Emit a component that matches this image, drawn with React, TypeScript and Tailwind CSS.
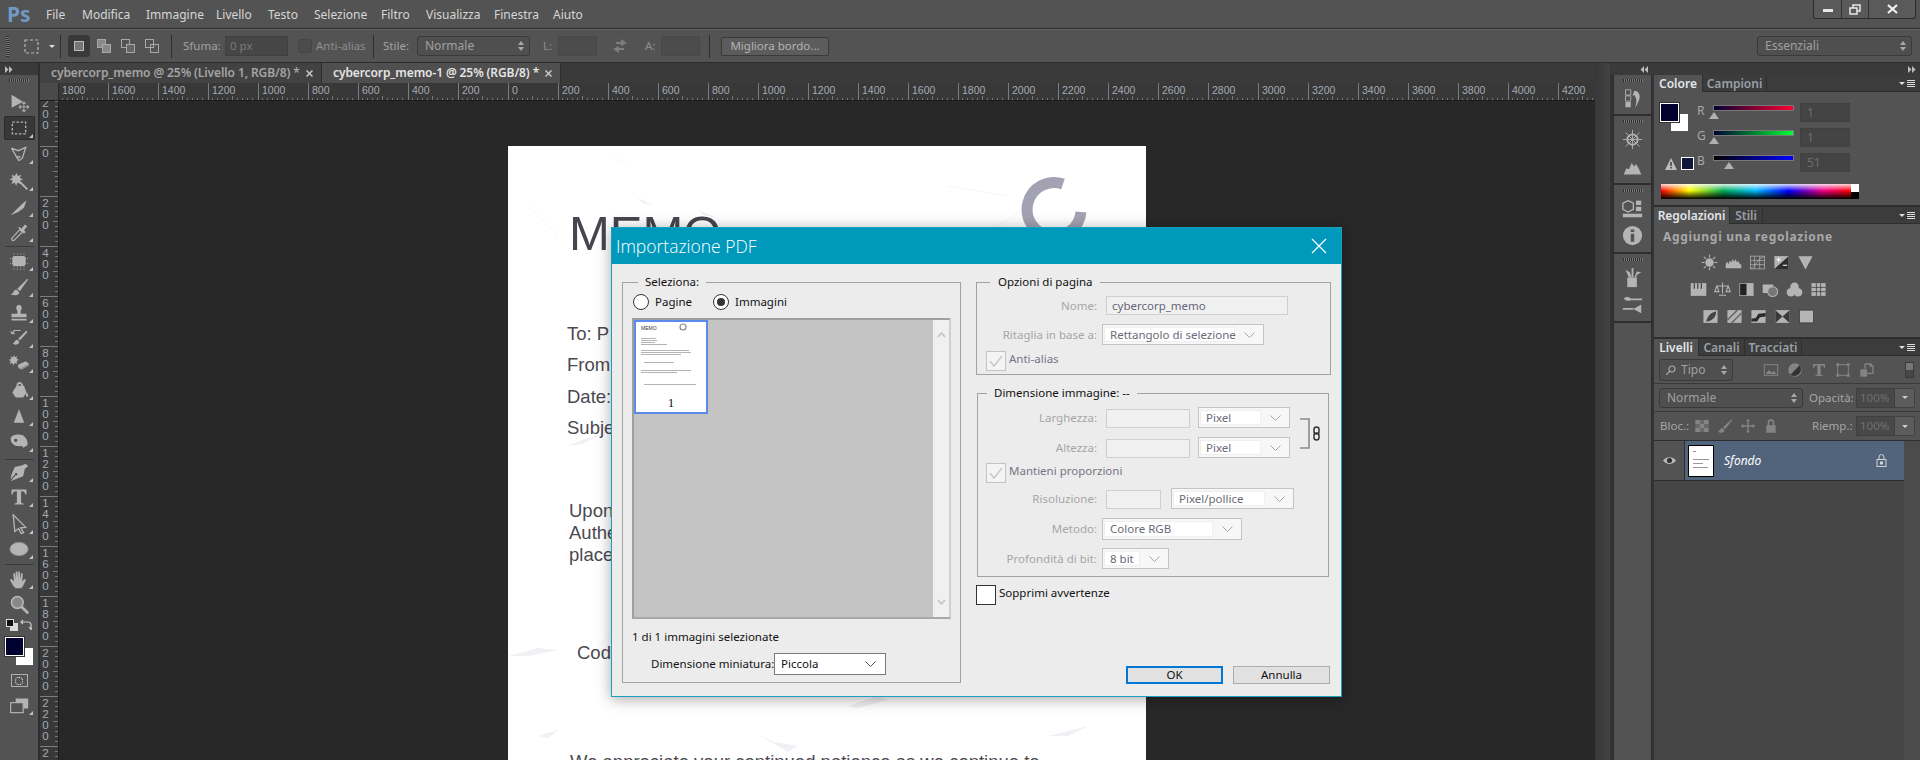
import type { ReactNode } from "react";

const ui = "font-['Noto_Sans','Open_Sans',sans-serif]";
const grip = "h-[3px] w-[20px] bg-[repeating-linear-gradient(to_right,#2e2e2e_0,#2e2e2e_1px,#7a7a7a_1px,#7a7a7a_2px)]";

function Ico({ size = 24, color = "text-[#b4b4b4]", children }: { size?: number; color?: string; children: ReactNode }) {
  return (
    <svg width={size} height={size} viewBox="0 0 24 24" className={`block shrink-0 ${color}`} fill="currentColor">
      {children}
    </svg>
  );
}

function Arrows({ dir }: { dir: "l" | "r" }) {
  return (
    <svg width="8" height="7" viewBox="0 0 8 7" fill="#bdbdbd" className="block">
      {dir === "r" ? <path d="M0 0l3.500 3.500L0 7zM4 0l3.500 3.500L4 7z" /> : <path d="M4 0L.5 3.500 4 7zM8 0L4.500 3.500 8 7z" />}
    </svg>
  );
}

const toolIcons: Record<string, ReactNode> = {
  move: (
    <>
      <path d="M3 3l13 8-13 7z" />
      <path d="M17 12v10M12 17h10M17 11l-2 2h4zM17 23l-2-2h4zM11 17l2-2v4zM23 17l-2-2v4z" stroke="currentColor" fill="none" strokeWidth="1" />
    </>
  ),
  marquee: <rect x="4" y="5" width="16" height="14" fill="none" stroke="currentColor" strokeWidth="1.6" strokeDasharray="3 2" />,
  lasso: <path d="M3 5l8 3 9-4-4 13-4 3-2-3 1-2 3 1M3 5l7 12" fill="none" stroke="currentColor" strokeWidth="1.6" />,
  wand: (
    <>
      <path d="M9 2l1.5 4 4-1.5-1.5 4 4 1.5-4 1.5 1 4-4-1.5-1.5 4-1.5-4-4 1.5 1.5-4-4-1.5 4-1.5-1.5-4 4 1.5z" />
      <path d="M12 12l10 10" stroke="currentColor" strokeWidth="2.4" />
    </>
  ),
  slice: <path d="M2 22L15 9l6-5-3 9-7 5z" />,
  dropper: (
    <>
      <path d="M4 22l-1-2L13 9l3 3L6 22z" fill="none" stroke="currentColor" strokeWidth="1.4" />
      <path d="M13 6l2 2 4-5 3 2-4 5 2 2-2 2-7-7z" />
    </>
  ),
  heal: (
    <>
      <rect x="4" y="6" width="16" height="12" rx="3" />
      <path d="M6 3v20M10 3v20M14 3v20M18 3v20M1 9h22M1 15h22" stroke="currentColor" strokeWidth=".9" strokeDasharray="1.5 1.5" />
    </>
  ),
  brush: <path d="M22 2L10 14l3 3L23 3zM9 15c-4 0-3 5-7 6 5 2 11 1 10-3z" />,
  stamp: <path d="M12 2a4 4 0 0 1 2 7v4h7v4H3v-4h7V9a4 4 0 0 1 2-7zM3 19h18v2H3z" />,
  history: (
    <>
      <path d="M21 3L11 13l2 2L22 5zM10 14c-3 0-3 4-6 5 4 2 9 1 8-3z" />
      <path d="M14 3H6l-2 4M4 7l-2-3M4 7l3-1" fill="none" stroke="currentColor" strokeWidth="1.4" />
    </>
  ),
  eraser: (
    <>
      <path d="M6 2l1 3 3-1-1 3 3 1-3 2 1 3-3-1-2 3-1-3-3 1 1-3-2-2 3-1-1-3 3 1z" />
      <path d="M11 14l9-4 4 3-9 5-4-1z" />
      <path d="M11 15v3l4 2 9-5v-2l-9 5z" opacity=".7" />
    </>
  ),
  bucket: <path d="M9 7h9l3 8-4 6H8l-4-6zM9 7c0-6 7-6 8 0h-2c-1-3-4-3-4 0zM21 15c2 2 3 4 1 5s-2-3-1-5z" />,
  gradient: <path d="M12 3l7 18H5z" />,
  dodge: <path d="M2 8c0-5 13-7 17-2 3 3 4 7 3 10l-5 3c-1-3-3-2-5-2-6 0-10-4-10-9zM8 8a2 2 0 1 0 .1 0z" fillRule="evenodd" />,
  pen: <path d="M20 2l3 3-4 3-2 9-10 4-5 2 6-7a1.500 1.500 0 1 0-1-1l-5 6 1-6 4-9 9-2z" />,
  text: <path d="M3 3h18v6h-1.500c-.5-3-1-4-5-4v14l3 1v1H6.500v-1l3-1V5c-4 0-4.500 1-5 4H3z" />,
  select: <path d="M5 1l15 15-6 .5 3.500 6-3 1-3-6L7 21z" fill="none" stroke="currentColor" strokeWidth="1.600" />,
  ellipse: <ellipse cx="12" cy="12" rx="11" ry="8" stroke="#8a8a8a" strokeWidth="1" />,
  hand: <path d="M5 20l-4-7 2-1 3 3-1-10h2l1 7V3h2l1 9V3h2l.5 9 1-7h2l-.5 10 2.500-3 2 1-4 8-2 2H8z" />,
  zoom: (
    <>
      <circle cx="10" cy="9" r="7" stroke="currentColor" strokeWidth="2" fillOpacity=".55" />
      <path d="M15 14l8 8" stroke="currentColor" strokeWidth="3.400" />
    </>
  ),
  screen: (
    <>
      <rect x="8" y="3" width="15" height="12" />
      <rect x="2" y="8" width="15" height="12" fill="#535353" stroke="currentColor" strokeWidth="1.400" />
    </>
  ),
};

function Tool({ name, h, active, corner = true, sep }: { name: string; h: number; active?: boolean; corner?: boolean; sep?: boolean }) {
  return (
    <>
      <div className={`relative flex w-[31px] items-center justify-center rounded-[2px] ${active ? "bg-[#383838] shadow-[inset_0_0_0_1px_#2c2c2c]" : ""}`} style={{ height: h }}>
        <Ico size={name === "move" ? 21 : name === "gradient" ? 18 : 20}>{toolIcons[name]}</Ico>
        {corner && <span className="absolute right-[2px] top-[calc(50%+6px)] h-0 w-0 border-b-[4px] border-l-[4px] border-b-[#c4c4c4] border-l-transparent" />}
      </div>
      {sep && <div className="my-[2px] h-px w-[29px] bg-[#3a3a3a]" />}
    </>
  );
}

function ToolBar() {
  return (
    <div className="flex h-full w-[40px] shrink-0 flex-col border-r-2 border-r-[#2e2e2e] bg-[#535353]">
      <div className="flex h-[12px] items-center bg-[#3a3a3a] pl-[5px]"><Arrows dir="r" /></div>
      <div className="flex flex-col items-center pt-[4px]">
        <div className={grip} />
        <div className="h-[7px]" />
        <Tool name="move" h={27} corner={false} />
        <Tool name="marquee" h={24} active />
        <Tool name="lasso" h={28} />
        <Tool name="wand" h={26} />
        <Tool name="slice" h={26} />
        <Tool name="dropper" h={24} sep />
        <Tool name="heal" h={24} />
        <Tool name="brush" h={28} />
        <Tool name="stamp" h={24} />
        <Tool name="history" h={26} />
        <Tool name="eraser" h={24} />
        <Tool name="bucket" h={30} />
        <Tool name="gradient" h={22} />
        <Tool name="dodge" h={30} sep />
        <Tool name="pen" h={20} />
        <Tool name="text" h={30} />
        <Tool name="select" h={24} />
        <Tool name="ellipse" h={26} sep />
        <Tool name="hand" h={24} />
        <Tool name="zoom" h={28} corner={false} />
        <div className="flex w-[30px] items-center justify-between px-[2px]">
          <svg width="12" height="12" viewBox="0 0 12 12"><rect x="4" y="4" width="8" height="8" fill="#d8d8d8" /><rect x="0.500" y="0.500" width="7" height="7" fill="#111" stroke="#ddd" /></svg>
          <svg width="12" height="12" viewBox="0 0 12 12" fill="none" stroke="#c8c8c8" strokeWidth="1.200"><path d="M1 3h7a3 3 0 0 1 3 3v4M3 1L1 3l2 2M9 8l2 2.500L13 8" /></svg>
        </div>
        <div className="relative mt-[6px] h-[29px] w-[29px]">
          <div className="absolute bottom-0 right-0 h-[19px] w-[19px] border border-[#555] bg-white" />
          <div className="absolute left-0 top-0 h-[19px] w-[19px] border border-white bg-[#01012f] shadow-[0_0_0_1px_#333]" />
        </div>
        <div className="mt-[8px] flex h-[13px] w-[17px] items-center justify-center border border-[#b0b0b0]">
          <span className="h-[8px] w-[8px] rounded-full border border-dotted border-white" />
        </div>
        <div className="relative mt-[9px] flex w-[31px] justify-center">
          <Ico size={20}>{toolIcons.screen}</Ico>
          <span className="absolute bottom-[1px] right-[2px] h-0 w-0 border-b-[4px] border-l-[4px] border-b-[#c4c4c4] border-l-transparent" />
        </div>
      </div>
    </div>
  );
}

function MenuBar() {
  const items: [string, number][] = [["File", 18], ["Modifica", 46], ["Immagine", 52], ["Livello", 34], ["Testo", 28], ["Selezione", 49], ["Filtro", 27], ["Visualizza", 50], ["Finestra", 41], ["Aiuto", 30]];
  return (
    <div className={`flex h-[29px] shrink-0 items-start border-b border-b-[#2c2c2c] bg-[#535353] ${ui}`}>
      <span className="ml-[7px] mt-[2px] w-[39px] text-[21px] font-bold leading-[24px] text-[#6f9ac4]">Ps</span>
      <div className="mt-[7px] flex gap-[18px]">
        {items.map(([t, w]) => (
          <span key={t} className="whitespace-nowrap text-center text-[12px] leading-[16px] text-[#d6d6d6]" style={{ width: w }}>{t}</span>
        ))}
      </div>
      <div className="ml-auto mr-[4px] flex h-[19px] rounded-b-[3px] border border-t-0 border-[#2c2c2c] bg-[#5a5a5a]">
        <span className="flex w-[28px] items-center justify-center border-r border-r-[#333]"><span className="mt-[3px] h-[3px] w-[10px] bg-[#e8e8e8]" /></span>
        <span className="flex w-[27px] items-center justify-center border-r border-r-[#333]">
          <svg width="12" height="11" viewBox="0 0 12 11" fill="none" stroke="#e8e8e8" strokeWidth="1.500"><rect x="4" y="1" width="7" height="6" /><rect x="1" y="4" width="7" height="6" fill="#5a5a5a" /></svg>
        </span>
        <span className="flex w-[46px] items-center justify-center">
          <svg width="11" height="10" viewBox="0 0 11 10" stroke="#f2f2f2" strokeWidth="2.200"><path d="M1 1l9 8M10 1l-9 8" /></svg>
        </span>
      </div>
    </div>
  );
}

function UpDown() {
  return (
    <span className="flex flex-col gap-[2px]">
      <span className="h-0 w-0 border-x-[3px] border-b-[4px] border-x-transparent border-b-[#a8a8a8]" />
      <span className="h-0 w-0 border-x-[3px] border-t-[4px] border-x-transparent border-t-[#a8a8a8]" />
    </span>
  );
}

function DarkSelect({ label, w, ml, h = 20 }: { label: string; w: number; ml: number; h?: number }) {
  return (
    <div className="flex shrink-0 items-center justify-between rounded-[3px] border border-[#3a3a3a] bg-[#4f4f4f] pl-[7px] pr-[5px] text-[12px] text-[#a0a0a0]" style={{ width: w, marginLeft: ml, height: h }}>
      <span>{label}</span>
      <UpDown />
    </div>
  );
}

const Sep = ({ ml }: { ml: number }) => <div className="h-[23px] w-px shrink-0 bg-[#2e2e2e]" style={{ marginLeft: ml }} />;

function OptLabel({ text, ml, w, dim }: { text: string; ml: number; w: number; dim?: boolean }) {
  return <span className={`shrink-0 whitespace-nowrap ${dim ? "text-[#8e8e8e]" : "text-[#a2a2a2]"}`} style={{ marginLeft: ml, width: w }}>{text}</span>;
}

function OptionsBar() {
  return (
    <div className={`flex h-[34px] shrink-0 items-center border-b border-b-[#2c2c2c] border-t border-t-[#666] bg-[#535353] text-[11.500px] ${ui}`}>
      <div className="ml-[6px] h-[21px] w-[3px] bg-[repeating-linear-gradient(to_bottom,#2e2e2e_0,#2e2e2e_1px,#7a7a7a_1px,#7a7a7a_2px)]" />
      <svg width="15" height="15" viewBox="0 0 15 15" className="ml-[15px]"><rect x="1" y="1" width="13" height="13" fill="none" stroke="#b8b8b8" strokeWidth="1.200" strokeDasharray="3 2" /></svg>
      <span className="ml-[10px] h-0 w-0 border-x-[3px] border-t-[3px] border-x-transparent border-t-[#ddd]" />
      <Sep ml={5} />
      <div className="ml-[7px] flex h-[22px] w-[22px] items-center justify-center rounded-[3px] bg-[#393939]">
        <span className="h-[10px] w-[10px] border border-[#bbb] bg-[#777]" />
      </div>
      {[0, 1, 2].map((i) => (
        <svg key={i} width="14" height="14" viewBox="0 0 14 14" className={i === 0 ? "ml-[7px]" : "ml-[10px]"} fill="none" stroke="#a8a8a8">
          <rect x="0.500" y="0.500" width="8" height="8" fill={i === 0 ? "#888" : "none"} />
          <rect x="5.500" y="5.500" width="8" height="8" fill={i === 1 ? "#666" : i === 0 ? "#888" : "none"} />
        </svg>
      ))}
      <Sep ml={12} />
      <OptLabel text="Sfuma:" ml={11} w={35} />
      <div className="ml-[7px] flex h-[20px] w-[63px] shrink-0 items-center border border-[#404040] bg-[#464646] pl-[4px] text-[#7a7a7a]">0 px</div>
      <span className="ml-[10px] h-[14px] w-[14px] shrink-0 rounded-[3px] border border-[#454545] bg-[#4c4c4c]" />
      <OptLabel text="Anti-alias" ml={4} w={47} dim />
      <Sep ml={10} />
      <OptLabel text="Stile:" ml={9} w={26} />
      <DarkSelect label="Normale" w={113} ml={8} />
      <OptLabel text="L:" ml={13} w={9} dim />
      <div className="ml-[6px] h-[20px] w-[39px] shrink-0 border border-[#484848] bg-[#4c4c4c]" />
      <svg width="16" height="14" viewBox="0 0 16 14" className="ml-[15px] shrink-0" fill="#7e7e7e"><path d="M9 0l6 4-6 3V5H4V3h5zM7 14l-6-4 6-3v2h5v2H7z" /></svg>
      <OptLabel text="A:" ml={17} w={10} dim />
      <div className="ml-[6px] h-[20px] w-[39px] shrink-0 border border-[#484848] bg-[#4c4c4c]" />
      <Sep ml={9} />
      <div className="ml-[11px] flex h-[19px] w-[108px] shrink-0 items-center justify-center rounded-[2px] border border-[#3a3a3a] bg-[#5c5c5c] text-[#b4b4b4]">Migliora bordo...</div>
      <DarkSelect label="Essenziali" w={155} ml={928} />
    </div>
  );
}

function Tab({ title, w, active }: { title: string; w: number; active?: boolean }) {
  return (
    <div className={`flex h-full items-center whitespace-nowrap border-r border-r-[#2c2c2c] pl-[11px] text-[12px] font-semibold ${active ? "bg-[#4f4f4f] text-[#e4e4e4]" : "bg-[#424242] text-[#a4a4a4]"}`} style={{ width: w }}>
      <span className="flex-1 tracking-[-0.1px]">{title}</span>
      <svg width="7" height="7" viewBox="0 0 7 7" stroke="#c8c8c8" strokeWidth="1.500" className="mr-[8px]"><path d="M.5.5l6 6M6.500.5l-6 6" /></svg>
    </div>
  );
}

const hMarks = [1800, 1600, 1400, 1200, 1000, 800, 600, 400, 200, 0, 200, 400, 600, 800, 1000, 1200, 1400, 1600, 1800, 2000, 2200, 2400, 2600, 2800, 3000, 3200, 3400, 3600, 3800, 4000, 4200, 4400];
const vMarks = [200, 0, 200, 400, 600, 800, 1000, 1200, 1400, 1600, 1800, 2000, 2200, 2400];
const subTicks = [5, 10, 15, 20, 25, 30, 35, 40, 45];

function HRuler() {
  return (
    <div className="flex h-[18px] shrink-0 border-b border-b-[#1d1d1d] bg-[#383838]">
      <div className="h-full w-[19px] shrink-0 border-r border-r-[#2a2a2a] bg-[#4a4a4a]" />
      <div className="flex flex-1 overflow-hidden">
        <div className="-ml-[1px] flex">
          {hMarks.map((m, i) => (
            <div key={i} className="h-full w-[50px] shrink-0 border-l border-l-[#7c7c7c] pl-[3px] font-['Liberation_Sans',sans-serif] text-[10.500px] leading-[14px] text-[#a4abb4]">
              {m}
              <svg width="49" height="4" className="-ml-[4px] mt-[-1px] block">
                {subTicks.map((t) => <rect key={t} x={t - 1} y={t === 25 ? 0 : 2} width="1" height={t === 25 ? 4 : 2} fill="#767676" />)}
              </svg>
            </div>
          ))}
        </div>
      </div>
    </div>
  );
}

function VRuler() {
  return (
    <div className="h-full w-[19px] shrink-0 overflow-hidden border-r border-r-[#1d1d1d] bg-[#383838]">
      <div className="-mt-[5px]">
        {vMarks.map((m, i) => (
          <div key={i} className="relative h-[50px] border-t border-t-[#7c7c7c] pr-[7px] pt-[1px] font-['Liberation_Sans',sans-serif] text-[11.500px] text-[#a4abb4]">
            {String(m).split("").map((d, j) => (
              <span key={j} className="block h-[11px] text-center leading-[11px]">{d}</span>
            ))}
            <svg width="5" height="50" className="absolute right-0 top-0">
              {subTicks.map((t) => <rect key={t} x={t === 25 ? 0 : 2} y={t - 1} width={t === 25 ? 5 : 3} height="1" fill="#767676" />)}
            </svg>
          </div>
        ))}
      </div>
    </div>
  );
}

function PaperMarks() {
  return (
    <svg width="638" height="614" className="absolute left-0 top-0" fill="#f0f0f5">
      <path d="M100 8l30 16-16-8zM130 52l16 8-12-3zM190 64l20 8-15-3zM60 300l14-6 20-6-20 10zM0 510l30-8 20 2-30 6zM340 560l30-10 10 4-30 8zM30 590l20-6-10 8zM540 590l40-10-20 10zM250 588l30 18 10-6-24-4z" />
      <path d="M20 60l30 30M440 40l60 10M520 60l-30 20M540 430l40 50M120 470l-30 30M420 480l50-10M200 420l30 40M560 270l30-10" stroke="#f6f6f9" fill="none" />
    </svg>
  );
}

function Paper() {
  const rows = ["To: P", "From", "Date:", "Subje"];
  return (
    <div className="relative ml-[449px] mt-[45px] h-[620px] w-[638px] bg-white font-['Liberation_Sans',sans-serif] text-[#4b4951]">
      <PaperMarks />
      <div className="relative pl-[61px] pt-[60px]">
        <h1 className="text-[49px] font-normal leading-[54px] text-[#47454d]">MEMO</h1>
        <svg width="70" height="60" viewBox="1020 176 70 60" className="absolute left-[512px] top-[30px]">
          <path d="M1063 184A27 27 0 1 0 1081 212" fill="none" stroke="#a2a2b2" strokeWidth="11" />
        </svg>
        <div className="-ml-[2px] mt-[63px] flex flex-col gap-[10px] text-[18.500px] leading-[21.300px]">
          {rows.map((r) => <span key={r}>{r}</span>)}
        </div>
        <div className="mt-[62px] text-[18.500px] leading-[22px]">
          <div>Upon</div>
          <div>Authe</div>
          <div>place</div>
        </div>
        <div className="ml-[8px] mt-[76px] text-[18.500px] leading-[22px]">Cod</div>
        <div className="ml-[1px] mt-[87px] whitespace-nowrap text-[18.500px] leading-[22px]">We appreciate your continued patience as we continue to</div>
      </div>
    </div>
  );
}

function MiniSelect({ label, w, dark }: { label: string; w: number; dark?: boolean }) {
  if (dark) {
    return (
      <div className="flex h-full shrink-0 items-center border border-[#7a7a7a] bg-white text-[#111]" style={{ width: w }}>
        <span className="ml-[6px] whitespace-nowrap">{label}</span>
        <svg width="11" height="6" viewBox="0 0 11 6" className="ml-auto mr-[9px] shrink-0" fill="none" stroke="#555"><path d="M.5.5l5 5 5-5" /></svg>
      </div>
    );
  }
  return (
    <div className="flex h-full shrink-0 items-center border border-[#c4c4c4] bg-[#f7f7f7] pl-[1px] text-[#6a6a78]" style={{ width: w }}>
      <span className="flex h-[calc(100%-4px)] min-w-0 flex-1 items-center whitespace-nowrap border border-[#efefef] bg-white pl-[5px]">{label}</span>
      <span className="flex w-[28px] shrink-0 justify-center">
        <svg width="11" height="6" viewBox="0 0 11 6" fill="none" stroke="#a8a8a8"><path d="M.5.5l5 5 5-5" /></svg>
      </span>
    </div>
  );
}

function Field({ label, labelW, h, mt, gap, children }: { label: string; labelW: number; h: number; mt: number; gap: number; children: ReactNode }) {
  return (
    <div className="flex items-center" style={{ height: h, marginTop: mt }}>
      <span className="shrink-0 whitespace-nowrap text-right text-[#a6a6a6]" style={{ width: labelW, marginRight: gap }}>{label}</span>
      {children}
    </div>
  );
}

const GreyInput = ({ w, text }: { w: number; text?: string }) => (
  <div className="flex h-[19px] shrink-0 items-center self-end border border-[#cfcfcf] bg-[#f0f0f0] pl-[5px] text-[#66667a]" style={{ width: w }}>{text}</div>
);

function Check({ label, mt, on = true }: { label: string; mt: number; on?: boolean }) {
  return (
    <div className="flex items-start" style={{ marginTop: mt }}>
      <span className={`flex h-[20px] w-[20px] shrink-0 items-center justify-center border ${on ? "border-[#c4c4c4] bg-[#f4f4f4]" : "border-[#333] bg-white"}`}>
        {on && <svg width="14" height="12" viewBox="0 0 14 12" fill="none" stroke="#c8c8c8" strokeWidth="1.500"><path d="M1 6l4 5 8-10" /></svg>}
      </span>
      <span className={`ml-[3px] whitespace-nowrap leading-[15px] ${on ? "text-[#757585]" : "text-[#111]"}`}>{label}</span>
    </div>
  );
}

function Radio({ label, on, w }: { label: string; on?: boolean; w: number }) {
  return (
    <div className="flex items-center" style={{ width: w }}>
      <span className="flex h-[16px] w-[16px] items-center justify-center rounded-full border border-[#333] bg-white">
        {on && <span className="h-[8px] w-[8px] rounded-full bg-[#333]" />}
      </span>
      <span className="ml-[6px] text-[#111]">{label}</span>
    </div>
  );
}

function Thumb() {
  const lines: [number, number, number][] = [[3, 16, 15], [3, 18, 16], [3, 20, 14], [3, 22, 26], [3, 28, 48], [3, 30, 50], [3, 32, 40], [6, 40, 30], [3, 48, 50], [3, 50, 36], [6, 62, 52]];
  return (
    <div className="relative h-[94px] w-[74px] border-2 border-[#5c8aec] bg-white">
      <span className="absolute left-[5px] top-[3px] font-['Liberation_Sans',sans-serif] text-[5px] leading-[6px] text-[#333]">MEMO</span>
      <svg width="70" height="74" className="absolute left-0 top-0">
        <circle cx="47" cy="5" r="3" fill="none" stroke="#888" strokeWidth="1.200" />
        {lines.map(([x, y, w], i) => <rect key={i} x={x + 2} y={y} width={w} height="1" fill="#b4b4b4" />)}
      </svg>
      <span className="absolute bottom-[2px] left-0 w-full text-center font-['Liberation_Serif',serif] text-[13px] leading-[14px] text-[#111]">1</span>
    </div>
  );
}

function Dialog() {
  return (
    <div className={`absolute left-[611px] top-[227px] flex h-[470px] w-[731px] flex-col border border-[#1aa0bf] bg-[#ececec] text-[11.500px] leading-[16px] text-[#111] shadow-[0_2px_14px_rgba(0,0,0,0.35)] ${ui}`}>
      <div className="flex h-[36px] shrink-0 items-center justify-between bg-[#0099bc] pl-[4px] pr-[14px]">
        <span className="font-['Open_Sans',sans-serif] text-[17.500px] font-light text-white">Importazione PDF</span>
        <svg width="16" height="16" viewBox="0 0 16 16" stroke="#fff" strokeWidth="1.200"><path d="M1 1l14 14M15 1L1 15" /></svg>
      </div>
      <div className="flex flex-1 pl-[10px] pr-[10px] pt-[10px]">
        <fieldset className="h-[409px] w-[339px] shrink-0 border border-[#a2a2a2] pl-[9px]">
          <legend className="ml-[6px] px-[7px]">Seleziona:</legend>
          <div className="ml-[1px] mt-[3px] flex h-[17px]">
            <Radio label="Pagine" w={80} />
            <Radio label="Immagini" w={90} on />
          </div>
          <div className="mt-[8px] flex h-[301px] w-[319px] border-2 border-[#a0a0a0] border-b-[#a8a8a8] border-r-[#cfcfcf] bg-[#c4c4c4]">
            <div className="flex-1"><Thumb /></div>
            <div className="flex w-[16px] flex-col items-center justify-between bg-[#f0f0f0] py-[12px]">
              <svg width="9" height="6" viewBox="0 0 9 6" fill="none" stroke="#c4c4c4" strokeWidth="1.600"><path d="M1 5l3.500-4L8 5" /></svg>
              <svg width="9" height="6" viewBox="0 0 9 6" fill="none" stroke="#c4c4c4" strokeWidth="1.600"><path d="M1 1l3.500 4L8 1" /></svg>
            </div>
          </div>
          <p className="mt-[10px]">1 di 1 immagini selezionate</p>
          <div className="ml-[19px] mt-[8px] flex h-[22px] items-center">
            <span className="w-[123px] shrink-0 whitespace-nowrap">Dimensione miniatura:</span>
            <div className="h-[22px]"><MiniSelect label="Piccola" w={112} dark /></div>
          </div>
        </fieldset>
        <div className="ml-[15px] flex w-[355px] flex-col">
          <fieldset className="h-[101px] border border-[#a2a2a2]">
            <legend className="ml-[13px] px-[8px]">Opzioni di pagina</legend>
            <Field label="Nome:" labelW={120} h={19} mt={6} gap={9}><GreyInput w={182} text="cybercorp_memo" /></Field>
            <Field label="Ritaglia in base a:" labelW={120} h={21} mt={9} gap={5}><MiniSelect label="Rettangolo di selezione" w={162} /></Field>
            <div className="ml-[9px]"><Check label="Anti-alias" mt={6} /></div>
          </fieldset>
          <fieldset className="ml-[1px] mt-[10px] h-[192px] w-[352px] border border-[#a2a2a2]">
            <legend className="ml-[9px] px-[7px]">Dimensione immagine: --</legend>
            <div className="flex">
              <div>
                <Field label="Larghezza:" labelW={119} h={21} mt={6} gap={9}>
                  <GreyInput w={84} /><div className="ml-[8px] h-full"><MiniSelect label="Pixel" w={92} /></div>
                </Field>
                <Field label="Altezza:" labelW={119} h={21} mt={9} gap={9}>
                  <GreyInput w={84} /><div className="ml-[8px] h-full"><MiniSelect label="Pixel" w={92} /></div>
                </Field>
              </div>
              <svg width="26" height="34" viewBox="0 0 26 34" className="ml-[10px] mt-[17px] shrink-0" fill="none">
                <path d="M0 1h9v29H0" stroke="#8a8a8a" strokeWidth="1.600" />
                <rect x="14" y="9" width="5" height="7" rx="2.500" stroke="#333" strokeWidth="1.500" />
                <rect x="14" y="15" width="5" height="7" rx="2.500" stroke="#333" strokeWidth="1.500" />
              </svg>
            </div>
            <div className="ml-[8px]"><Check label="Mantieni proporzioni" mt={5} /></div>
            <Field label="Risoluzione:" labelW={119} h={21} mt={5} gap={9}>
              <GreyInput w={55} /><div className="ml-[10px] h-full"><MiniSelect label="Pixel/pollice" w={123} /></div>
            </Field>
            <Field label="Metodo:" labelW={119} h={22} mt={9} gap={5}><MiniSelect label="Colore RGB" w={140} /></Field>
            <Field label="Profondità di bit:" labelW={119} h={21} mt={8} gap={5}><MiniSelect label="8 bit" w={67} /></Field>
          </fieldset>
          <Check label="Sopprimi avvertenze" mt={8} on={false} />
          <div className="mt-[61px] flex justify-end gap-[10px] pr-[1px]">
            <button className="h-[18px] w-[97px] border-2 border-[#0078d7] bg-[#e1e1e1] leading-[14px] text-[#111]">OK</button>
            <button className="h-[18px] w-[97px] border border-[#adadad] bg-[#e1e1e1] leading-[16px] text-[#111]">Annulla</button>
          </div>
        </div>
      </div>
    </div>
  );
}

function DockGroup({ h, icons }: { h: number; icons: ReactNode[] }) {
  return (
    <div className="flex flex-col items-center border-b-2 border-b-[#2e2e2e] pt-[4px]" style={{ height: h }}>
      <div className={grip} />
      <div className="flex flex-1 flex-col items-center justify-evenly">
        {icons.map((ic, i) => <Ico key={i} size={21}>{ic}</Ico>)}
      </div>
    </div>
  );
}

function Dock() {
  return (
    <div className="flex h-full w-[39px] shrink-0 flex-col border-x border-x-[#2e2e2e] bg-[#535353]">
      <DockGroup h={41} icons={[<><path d="M4 2h6v6H4zM4 9h6v6H4z" fill="none" stroke="currentColor" /><path d="M4 16h6v6H4zM14 3c5 0 7 5 6 9s-3 8-5 10c2-5 2-10-1-14l-2 1z" /></>]} />
      <DockGroup h={69} icons={[<><circle cx="12" cy="12" r="6" fill="none" stroke="currentColor" strokeWidth="2" /><path d="M12 1v22M1 12h22M4 4l16 16M20 4L4 20" stroke="currentColor" /></>, <path d="M2 21l3-7 3 1 3-7 3 4 2-3 3 5 3 7z" />]} />
      <DockGroup h={69} icons={[<><path d="M7 3l6 3v7l-6 3-6-3V6z" fill="none" stroke="currentColor" strokeWidth="1.500" /><rect x="16" y="3" width="6" height="5" /><rect x="16" y="10" width="6" height="5" /><rect x="1" y="18" width="22" height="4" /></>, <><circle cx="12" cy="12" r="11" /><path d="M10 10h4v9h-4zM10 5h4v3h-4z" fill="#535353" /></>]} />
      <DockGroup h={69} icons={[<><rect x="6" y="12" width="11" height="11" /><path d="M8 12L4 3l5 3 2 6zM11 12V1h2v11zM14 12l3-7 5 1-5 3-1 3z" /></>, <><path d="M2 5c4-3 7-1 8 0h13v2H10C8 8 4 8 2 5zM1 16h12v2H1zM13 17l9-5v10z" /></>]} />
    </div>
  );
}

function PanelTabs({ tabs, h = 17 }: { tabs: [string, number][]; h?: number }) {
  return (
    <div className="flex shrink-0 items-stretch border-b border-b-[#2e2e2e] bg-[#3c3c3c]" style={{ height: h }}>
      {tabs.map(([t, w], i) => (
        <div key={t} className={`flex items-center justify-center border-r border-r-[#2e2e2e] pt-[1px] text-[12px] font-semibold ${i === 0 ? "mb-[-1px] bg-[#535353] text-[#e2e6ea]" : "text-[#9aa0a6]"}`} style={{ width: w }}>{t}</div>
      ))}
      <div className="ml-auto mr-[5px] flex items-center gap-[2px]">
        <span className="h-0 w-0 border-x-[3px] border-t-[3px] border-x-transparent border-t-[#ddd]" />
        <span className="h-[7px] w-[8px] bg-[repeating-linear-gradient(to_bottom,#ddd_0,#ddd_1px,transparent_1px,transparent_2px)]" />
      </div>
    </div>
  );
}

function Slider({ label, cls, thumb, val, mt }: { label: string; cls: string; thumb: number; val: string; mt: number }) {
  return (
    <div className="flex h-[19px]" style={{ marginTop: mt }}>
      <span className="w-[16px] text-[12px] leading-[16px] text-[#a6a6a6]">{label}</span>
      <div className="relative w-[81px] pt-[2px]">
        <div className={`h-[6px] w-full border border-[#777] ${cls}`} />
        <span className="absolute top-[9px] h-0 w-0 border-x-[5px] border-b-[7px] border-x-transparent border-b-[#b0b0b0]" style={{ left: thumb }} />
      </div>
      <div className="ml-[6px] flex h-[19px] w-[50px] items-center border border-[#404040] bg-[#444] pl-[6px] text-[12px] text-[#6e6e6e]">{val}</div>
    </div>
  );
}

function ColorPanel() {
  return (
    <div className="h-[132px] shrink-0 border-b-2 border-b-[#2e2e2e]">
      <PanelTabs tabs={[["Colore", 49], ["Campioni", 64]]} />
      <div className="flex pl-[6px] pt-[11px]">
        <div className="w-[37px]">
          <div className="relative h-[29px] w-[29px]">
            <div className="absolute bottom-0 right-0 h-[19px] w-[19px] border border-[#555] bg-white" />
            <div className="absolute left-0 top-0 h-[19px] w-[19px] border border-white bg-[#01012f] shadow-[0_0_0_1px_#333]" />
          </div>
          <div className="ml-[5px] mt-[25px] flex items-center gap-[4px]">
            <svg width="12" height="12" viewBox="0 0 12 12"><path d="M6 0l6 12H0z" fill="#bdbdbd" /><path d="M5.300 4h1.400v4H5.300zM5.300 9h1.400v1.500H5.300z" fill="#333" /></svg>
            <span className="h-[13px] w-[13px] border border-white bg-[#10163c]" />
          </div>
        </div>
        <div>
          <Slider label="R" cls="bg-[linear-gradient(to_right,#000033,#ff0033)]" thumb={-4} val="1" mt={0} />
          <Slider label="G" cls="bg-[linear-gradient(to_right,#000033,#00ff33)]" thumb={-4} val="1" mt={6} />
          <Slider label="B" cls="bg-[linear-gradient(to_right,#010100,#0101ff)]" thumb={11} val="51" mt={6} />
        </div>
      </div>
      <div className="ml-[7px] mt-[12px] flex h-[15px] w-[198px]">
        <div className="w-[190px] bg-[linear-gradient(to_bottom,rgba(255,255,255,0.85),transparent_45%,#000_100%),linear-gradient(to_right,#f00,#ff0_15%,#0a5_33%,#0bf_50%,#00f_67%,#e08_85%,#f00)]" />
        <div className="flex w-[8px] flex-col">
          <span className="h-1/2 bg-white" />
          <span className="h-1/2 bg-black" />
        </div>
      </div>
    </div>
  );
}

const adj: { ml: number; icons: ReactNode[] }[] = [
  {
    ml: 47,
    icons: [
      <><circle cx="12" cy="12" r="6" /><path d="M12 1v4M12 19v4M1 12h4M19 12h4M4 4l3 3M17 17l3 3M20 4l-3 3M7 17l-3 3" stroke="currentColor" strokeWidth="1.600" /></>,
      <path d="M1 20v-6l2-3 2 3 2-5 2 3 2-5 2 4 2-4 2 5 2-2 2 4 2 1v5z" />,
      <><rect x="2" y="3" width="20" height="18" fill="none" stroke="currentColor" /><path d="M2 20c9 0 9-16 20-16M2 9h20M2 15h20M8 3v18M15 3v18" stroke="currentColor" fill="none" /></>,
      <><rect x="2" y="3" width="20" height="18" /><path d="M2 21L22 3v18z" fill="#2e2e2e" /><path d="M5 8h6M8 5v6M14 16h6" stroke="#fff" strokeWidth="1.500" /></>,
      <path d="M2 3h20L12 22z" />,
    ],
  },
  {
    ml: 36,
    icons: [
      <><rect x="1" y="3" width="22" height="18" /><path d="M6 3v8M11 3v8M16 3v8" stroke="#333" strokeWidth="1.500" /></>,
      <path d="M12 2v4M4 7h16M12 6v12M7 20h10M4 7l-3 8h6zM20 7l-3 8h6z" stroke="currentColor" fill="none" strokeWidth="1.500" />,
      <><rect x="2" y="3" width="20" height="18" /><rect x="3" y="4" width="9" height="16" fill="#222" /></>,
      <><rect x="1" y="5" width="15" height="12" rx="1" /><circle cx="15" cy="15" r="7" fill="#777" stroke="currentColor" strokeWidth="1.500" /></>,
      <><circle cx="12" cy="8" r="6" /><circle cx="7" cy="16" r="6" /><circle cx="17" cy="16" r="6" /></>,
      <><rect x="2" y="3" width="20" height="18" /><path d="M2 9h20M2 15h20M9 3v18M15 3v18" stroke="#333" /></>,
    ],
  },
  {
    ml: 48,
    icons: [
      <><rect x="2" y="3" width="20" height="18" /><path d="M6 19C8 10 14 6 20 5 20 13 14 19 6 19z" fill="#444" /></>,
      <><rect x="2" y="3" width="20" height="18" /><path d="M2 17L16 3M8 21L22 7" stroke="#666" strokeWidth="2" /></>,
      <><rect x="2" y="3" width="20" height="18" /><path d="M2 15l6-1 4-6 10-1v5l-8 1-4 6H2z" fill="#2b2b2b" /></>,
      <><rect x="2" y="3" width="20" height="18" /><path d="M2 3l10 9L2 21zM22 3L12 12l10 9z" fill="#3a3a3a" /></>,
      <rect x="2" y="3" width="20" height="18" stroke="#333" />,
    ],
  },
];

function LayersIcon({ children }: { children: ReactNode }) {
  return <Ico size={16} color="text-[#848484]">{children}</Ico>;
}

function AdjustPanel() {
  return (
    <div className="h-[132px] shrink-0 border-b-2 border-b-[#2e2e2e]">
      <PanelTabs tabs={[["Regolazioni", 76], ["Stili", 33]]} />
      <p className="pl-[9px] pt-[5px] text-[12px] font-bold leading-[16px] tracking-[0.7px] text-[#a9a9a9]">Aggiungi una regolazione</p>
      <div className="mt-[8px] flex flex-col gap-[9px]">
        {adj.map((row, i) => (
          <div key={i} className="flex h-[18px] gap-[7px]" style={{ marginLeft: row.ml }}>
            {row.icons.map((ic, j) => (
              <span key={j} className="flex w-[17px] items-center justify-center"><Ico size={17}>{ic}</Ico></span>
            ))}
          </div>
        ))}
      </div>
    </div>
  );
}

function InputDrop({ ml }: { ml: number }) {
  return (
    <div className="flex h-[20px] shrink-0" style={{ marginLeft: ml }}>
      <div className="flex w-[39px] items-center border border-[#404040] bg-[#484848] pl-[3px] text-[11.500px] text-[#707070]">100%</div>
      <div className="flex w-[20px] items-center justify-center rounded-r-[2px] border border-l-0 border-[#404040] bg-[#5c5c5c]">
        <span className="h-0 w-0 border-x-[3px] border-t-[3px] border-x-transparent border-t-[#ccc]" />
      </div>
    </div>
  );
}

function LayersPanel() {
  return (
    <div className="flex flex-1 flex-col">
      <PanelTabs tabs={[["Livelli", 45], ["Canali", 46], ["Tracciati", 57]]} />
      <div className="flex h-[28px] shrink-0 items-center border-b border-b-[#3a3a3a]">
        <div className="ml-[5px] flex h-[22px] w-[74px] items-center rounded-[3px] border border-[#3a3a3a] bg-[#4f4f4f] pl-[6px] pr-[5px] text-[12px] text-[#a0a0a0]">
          <svg width="10" height="10" viewBox="0 0 10 10" fill="none" stroke="#a8a8a8" strokeWidth="1.200"><circle cx="6" cy="4" r="3" /><path d="M4 6L0 10" /></svg>
          <span className="ml-[5px] flex-1">Tipo</span>
          <UpDown />
        </div>
        <div className="ml-[30px] flex gap-[8px]">
          <LayersIcon><rect x="2" y="4" width="20" height="16" fill="none" stroke="currentColor" strokeWidth="1.500" /><path d="M4 18l5-6 4 4 3-3 4 5z" /></LayersIcon>
          <LayersIcon><circle cx="12" cy="12" r="10" /><path d="M5 19L19 5a10 10 0 0 1-14 14z" fill="#333" /></LayersIcon>
          <LayersIcon><path d="M3 3h18v6h-1.500c-.5-3-1-4-5-4v14l3 1v1H6.500v-1l3-1V5c-4 0-4.500 1-5 4H3z" /></LayersIcon>
          <LayersIcon><rect x="4" y="4" width="16" height="16" fill="none" stroke="currentColor" strokeWidth="1.500" /><path d="M2 2h4v4H2zM18 2h4v4h-4zM2 18h4v4H2zM18 18h4v4h-4z" /></LayersIcon>
          <LayersIcon><path d="M10 2h8l4 4v12H12v-2h8V7h-4V4h-6v6H8V3z" /><rect x="2" y="11" width="10" height="11" /></LayersIcon>
        </div>
        <div className="ml-[30px] flex h-[16px] w-[9px] flex-col border border-[#3a3a3a]">
          <span className="h-1/2 bg-[#777]" />
          <span className="h-1/2 bg-[#464646]" />
        </div>
      </div>
      <div className="flex h-[28px] shrink-0 items-center border-b border-b-[#3a3a3a]">
        <DarkSelect label="Normale" w={144} ml={5} />
        <span className="ml-[6px] w-[42px] shrink-0 whitespace-nowrap text-[11.500px] text-[#a6a6a6]">Opacità:</span>
        <InputDrop ml={5} />
      </div>
      <div className="flex h-[29px] shrink-0 items-center border-b border-b-[#2e2e2e]">
        <span className="ml-[6px] w-[29px] shrink-0 text-[11.500px] text-[#a6a6a6]">Bloc.:</span>
        <div className="ml-[5px] flex gap-[7px]">
          <LayersIcon><path d="M2 3h7v6H2zM15 3h7v6h-7zM9 9h6v6H9zM2 15h7v6H2zM15 15h7v6h-7z" /><path d="M9 3h6v6H9zM2 9h7v6H2zM15 9h7v6h-7zM9 15h6v6H9z" opacity=".45" /></LayersIcon>
          <LayersIcon><path d="M22 2L9 14l3 3L23 3zM8 15c-3 0-3 4-7 6 6 2 11 1 10-3z" /></LayersIcon>
          <LayersIcon><path d="M12 1l3 4h-2v6h6V9l4 3-4 3v-2h-6v6h2l-3 4-3-4h2v-6H5v2l-4-3 4-3v2h6V5H9z" /></LayersIcon>
          <LayersIcon><path d="M7 11V7a5 5 0 0 1 10 0v4h2v11H5V11zM9.500 11h5V7a2.500 2.500 0 0 0-5 0z" /></LayersIcon>
        </div>
        <span className="ml-[33px] w-[39px] shrink-0 whitespace-nowrap text-[11.500px] text-[#a6a6a6]">Riemp.:</span>
        <InputDrop ml={5} />
      </div>
      <div className="flex flex-1">
        <div className="w-[250px] bg-[#464646]">
          <div className="flex h-[40px] border-b border-b-[#2e2e2e]">
            <div className="flex w-[31px] items-center justify-center border-r border-r-[#2e2e2e] bg-[#535353]">
              <svg width="13" height="9" viewBox="0 0 13 9"><path d="M0 4.500C3 0 10 0 13 4.500 10 9 3 9 0 4.500z" fill="#b8b8b8" /><circle cx="6.500" cy="4.500" r="2.500" fill="#2e2e2e" /></svg>
            </div>
            <div className="flex flex-1 items-center bg-[#52647b]">
              <div className="ml-[3px] h-[32px] w-[26px] border border-black bg-white p-[3px]">
                <svg width="18" height="24" fill="#999"><rect x="1" y="2" width="3" height="1" /><rect x="1" y="10" width="16" height="1" /><rect x="1" y="14" width="10" height="1" /><rect x="1" y="18" width="15" height="1" /></svg>
              </div>
              <span className="ml-[10px] text-[12px] italic text-white">Sfondo</span>
              <svg width="11" height="13" viewBox="0 0 11 13" className="ml-auto mr-[17px]" fill="none" stroke="#cfd3d8"><rect x="1" y="5.500" width="9" height="7" /><path d="M3 5.500V3a2.500 2.500 0 0 1 5 0v2.500" /><rect x="4.500" y="8" width="2" height="2" fill="#cfd3d8" /></svg>
            </div>
          </div>
        </div>
        <div className="flex-1 bg-[#4b4b4b]" />
      </div>
    </div>
  );
}

function Panels() {
  return (
    <div className={`flex min-w-0 flex-1 flex-col bg-[#535353] ${ui}`}>
      <ColorPanel />
      <AdjustPanel />
      <LayersPanel />
    </div>
  );
}

export default function App() {
  return (
    <div className={`relative flex h-[760px] w-[1920px] flex-col overflow-hidden bg-[#535353] ${ui}`}>
      <MenuBar />
      <OptionsBar />
      <div className="flex min-h-0 flex-1">
        <ToolBar />
        <div className="flex w-[1555px] shrink-0 flex-col">
          <div className="flex h-[20px] shrink-0 bg-[#3a3a3a]">
            <Tab title="cybercorp_memo @ 25% (Livello 1, RGB/8) *" w={282} />
            <Tab title="cybercorp_memo-1 @ 25% (RGB/8) *" w={239} active />
          </div>
          <HRuler />
          <div className="flex min-h-0 flex-1">
            <VRuler />
            <div className="min-w-0 flex-1 overflow-hidden bg-[#282828]"><Paper /></div>
          </div>
        </div>
        <div className="w-[15px] shrink-0 bg-[linear-gradient(to_right,#383838,#424242)]" />
        <div className="flex min-w-0 flex-1 flex-col bg-[#333]">
          <div className="flex h-[12px] shrink-0 items-center justify-between bg-[#3a3a3a] pl-[30px] pr-[4px]">
            <Arrows dir="l" /><Arrows dir="r" />
          </div>
          <div className="flex min-h-0 flex-1 pl-[3px]">
            <Dock />
            <div className="w-[2px] shrink-0" />
            <Panels />
          </div>
        </div>
      </div>
      <Dialog />
    </div>
  );
}
